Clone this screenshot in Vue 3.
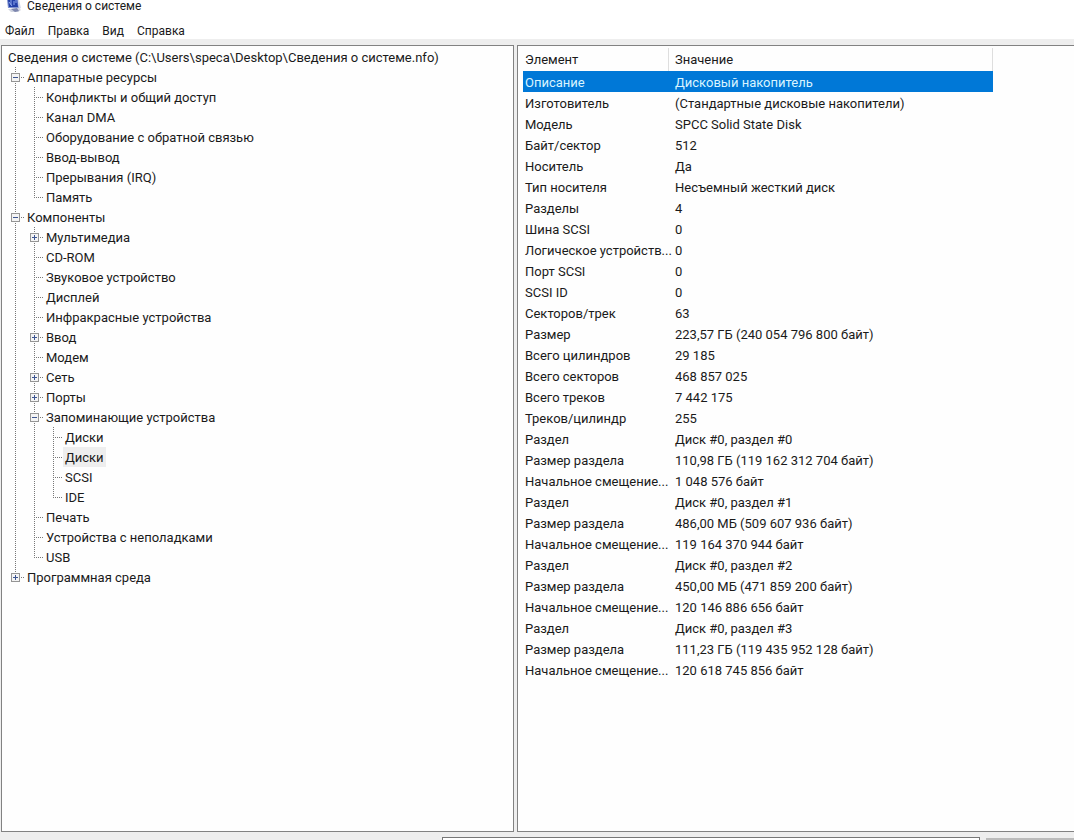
<script setup>
import { ref } from 'vue'

const menus = ['Файл', 'Правка', 'Вид', 'Справка']

// last: the vertical guide stops at this row
const nodes = [
  { label: 'Аппаратные ресурсы', depth: 0, box: 'minus' },
  { label: 'Конфликты и общий доступ', depth: 1 },
  { label: 'Канал DMA', depth: 1 },
  { label: 'Оборудование с обратной связью', depth: 1 },
  { label: 'Ввод-вывод', depth: 1 },
  { label: 'Прерывания (IRQ)', depth: 1 },
  { label: 'Память', depth: 1, last: true },
  { label: 'Компоненты', depth: 0, box: 'minus' },
  { label: 'Мультимедиа', depth: 1, box: 'plus' },
  { label: 'CD-ROM', depth: 1 },
  { label: 'Звуковое устройство', depth: 1 },
  { label: 'Дисплей', depth: 1 },
  { label: 'Инфракрасные устройства', depth: 1 },
  { label: 'Ввод', depth: 1, box: 'plus' },
  { label: 'Модем', depth: 1 },
  { label: 'Сеть', depth: 1, box: 'plus' },
  { label: 'Порты', depth: 1, box: 'plus' },
  { label: 'Запоминающие устройства', depth: 1, box: 'minus' },
  { label: 'Диски', depth: 2 },
  { label: 'Диски', depth: 2 },
  { label: 'SCSI', depth: 2 },
  { label: 'IDE', depth: 2, last: true },
  { label: 'Печать', depth: 1 },
  { label: 'Устройства с неполадками', depth: 1 },
  { label: 'USB', depth: 1, last: true },
  { label: 'Программная среда', depth: 0, box: 'plus', last: true },
]

const rows = [
  ['Описание', 'Дисковый накопитель'],
  ['Изготовитель', '(Стандартные дисковые накопители)'],
  ['Модель', 'SPCC Solid State Disk'],
  ['Байт/сектор', '512'],
  ['Носитель', 'Да'],
  ['Тип носителя', 'Несъемный жесткий диск'],
  ['Разделы', '4'],
  ['Шина SCSI', '0'],
  ['Логическое устройств...', '0'],
  ['Порт SCSI', '0'],
  ['SCSI ID', '0'],
  ['Секторов/трек', '63'],
  ['Размер', '223,57 ГБ (240 054 796 800 байт)'],
  ['Всего цилиндров', '29 185'],
  ['Всего секторов', '468 857 025'],
  ['Всего треков', '7 442 175'],
  ['Треков/цилиндр', '255'],
  ['Раздел', 'Диск #0, раздел #0'],
  ['Размер раздела', '110,98 ГБ (119 162 312 704 байт)'],
  ['Начальное смещение...', '1 048 576 байт'],
  ['Раздел', 'Диск #0, раздел #1'],
  ['Размер раздела', '486,00 МБ (509 607 936 байт)'],
  ['Начальное смещение...', '119 164 370 944 байт'],
  ['Раздел', 'Диск #0, раздел #2'],
  ['Размер раздела', '450,00 МБ (471 859 200 байт)'],
  ['Начальное смещение...', '120 146 886 656 байт'],
  ['Раздел', 'Диск #0, раздел #3'],
  ['Размер раздела', '111,23 ГБ (119 435 952 128 байт)'],
  ['Начальное смещение...', '120 618 745 856 байт'],
]

const current = ref(19)
const selectedRow = ref(0)
</script>

<template>
  <div class="window">
    <header class="title">
      <svg class="app-icon" viewBox="0 0 14 13" aria-hidden="true">
        <path d="M0 0H11L12 8L1 8Z" fill="#8194d2" />
        <path d="M1 0H10L11 7L2 7Z" fill="#2440a8" />
        <path d="M2 2L5 6M4 0V5M7 1V5M9 0V3" stroke="#8fa8ee" stroke-width="1" />
        <path d="M11 0H12L14 8L12 9Z" fill="#d3d9ea" />
        <path d="M1 9L12 8L14 10L11 12L4 12Z" fill="#d0d4e0" />
        <path d="M4 9L10 8L12 11L8 12Z" fill="#7d86ae" />
      </svg>
      <h1>Сведения о системе</h1>
    </header>
    <nav class="menu">
      <button v-for="m in menus" :key="m" type="button">{{ m }}</button>
    </nav>

    <main class="panes">
      <section class="pane tree">
        <button type="button" class="label">Сведения о системе (C:\Users\speca\Desktop\Сведения о системе.nfo)</button>
        <ul>
          <li v-for="(n, i) in nodes" :key="i">
            <span v-for="d in n.depth" :key="d" class="cell line"></span>
            <span class="cell branch" :class="{ last: n.last }">
              <button v-if="n.box" type="button" class="expander" :aria-label="n.label">
                <svg viewBox="0 0 9 9" aria-hidden="true">
                  <rect x="0.5" y="0.5" width="8" height="8" fill="#f4f4f4" stroke="#959595" />
                  <path d="M2 4.5H7" stroke="#3d5590" />
                  <path v-if="n.box === 'plus'" d="M4.5 2V7" stroke="#3d5590" />
                </svg>
              </button>
            </span>
            <button type="button" class="label" :class="{ current: i === current }" @click="current = i">{{ n.label }}</button>
          </li>
        </ul>
      </section>

      <section class="pane details">
        <table>
          <thead>
            <tr><th class="name">Элемент</th><th>Значение</th></tr>
          </thead>
          <tbody>
            <tr v-for="(r, i) in rows" :key="i" :class="{ selected: i === selectedRow }" @click="selectedRow = i">
              <td>{{ r[0] }}</td><td>{{ r[1] }}</td>
            </tr>
          </tbody>
        </table>
      </section>
    </main>

    <footer class="find">
      <input type="text" aria-label="Найти" />
      <button type="button" aria-label="Поиск"></button>
    </footer>
  </div>
</template>

<style>
body {
  background: #fff;
}
</style>

<style scoped>
.window {
  display: flex;
  flex-direction: column;
  height: 100vh;
  overflow: hidden;
  background: #eee;
  color: #1a1a1a;
  font-family: Roboto, "Noto Sans", sans-serif;
  font-size: 13px;
  line-height: 20px;
}
button {
  margin: 0;
  padding: 0;
  border: 0;
  background: none;
  color: inherit;
  font: inherit;
  text-align: left;
  white-space: nowrap;
}
.title {
  display: flex;
  align-items: flex-start;
  gap: 6px;
  height: 20px;
  padding-left: 7px;
  background: #fff;
}
.app-icon {
  flex: none;
  width: 14px;
  height: 13px;
}
h1 {
  margin: 0;
  font-size: 12px;
  font-weight: 400;
  line-height: 13px;
}
.menu {
  display: flex;
  align-items: flex-start;
  gap: 13px;
  box-sizing: border-box;
  height: 19px;
  padding: 2px 0 0 5px;
  background: #fff;
  font-size: 12px;
  line-height: 18px;
}
.panes {
  display: grid;
  grid-template-columns: 513fr 557fr;
  gap: 3px;
  flex: 1;
  min-height: 0;
  margin: 6px 0 5px 1px;
}
.pane {
  min-width: 0;
  overflow: hidden;
  border: 1px solid #828282;
  background: #fefefe;
}
.tree {
  padding: 1px 4px;
}
.label {
  box-sizing: border-box;
  height: 20px;
  padding: 2px 2px 0;
  line-height: 18px;
}
.tree > .label {
  display: block;
}
.current {
  background: #eee;
}
ul {
  margin: 0;
  padding: 0;
  list-style: none;
}
li {
  display: flex;
  height: 20px;
}
.cell {
  display: flex;
  align-items: flex-start;
  justify-content: center;
  flex: none;
  width: 19px;
  height: 20px;
  background-repeat: no-repeat;
}
.line {
  background-image: repeating-linear-gradient(#777 0 1px, transparent 1px 2px);
  background-position: 9px 0;
  background-size: 1px 20px;
}
.branch {
  background-image:
    repeating-linear-gradient(#777 0 1px, transparent 1px 2px),
    repeating-linear-gradient(90deg, #777 0 1px, transparent 1px 2px);
  background-position: 9px 0, 9px 10px;
  background-size: 1px 20px, 9px 1px;
}
.last {
  background-size: 1px 10px, 9px 1px;
}
.expander {
  width: 9px;
  height: 9px;
  margin-top: 6px;
}
.expander svg {
  display: block;
  width: 9px;
  height: 9px;
}
.details {
  padding: 2px 0 0 5px;
  border-right: 0;
}
table {
  width: 470px;
  border-collapse: separate;
  border-spacing: 0;
  table-layout: fixed;
}
th,
td {
  box-sizing: border-box;
  height: 21px;
  padding: 2px 0 0 2px;
  font-weight: 400;
  line-height: 19px;
  text-align: left;
  white-space: nowrap;
}
th {
  height: 23px;
  padding-top: 0;
  border-right: 1px solid #dedede;
}
.name {
  width: 146px;
}
th + th,
td + td {
  padding-left: 6px;
}
.selected {
  background: #0078d7;
  color: #d9f4ff;
}
.find {
  display: grid;
  grid-template-columns: 538fr 88fr;
  gap: 6px;
  flex: none;
  height: 3px;
  margin-left: 41.155%;
  overflow: hidden;
}
.find input {
  box-sizing: border-box;
  width: 100%;
  height: 22px;
  border: 1px solid #777;
  background: #fff;
}
.find button {
  height: 22px;
  margin-top: 1px;
  border-top: 2px solid #bbb;
  background: #ddd;
}
</style>
